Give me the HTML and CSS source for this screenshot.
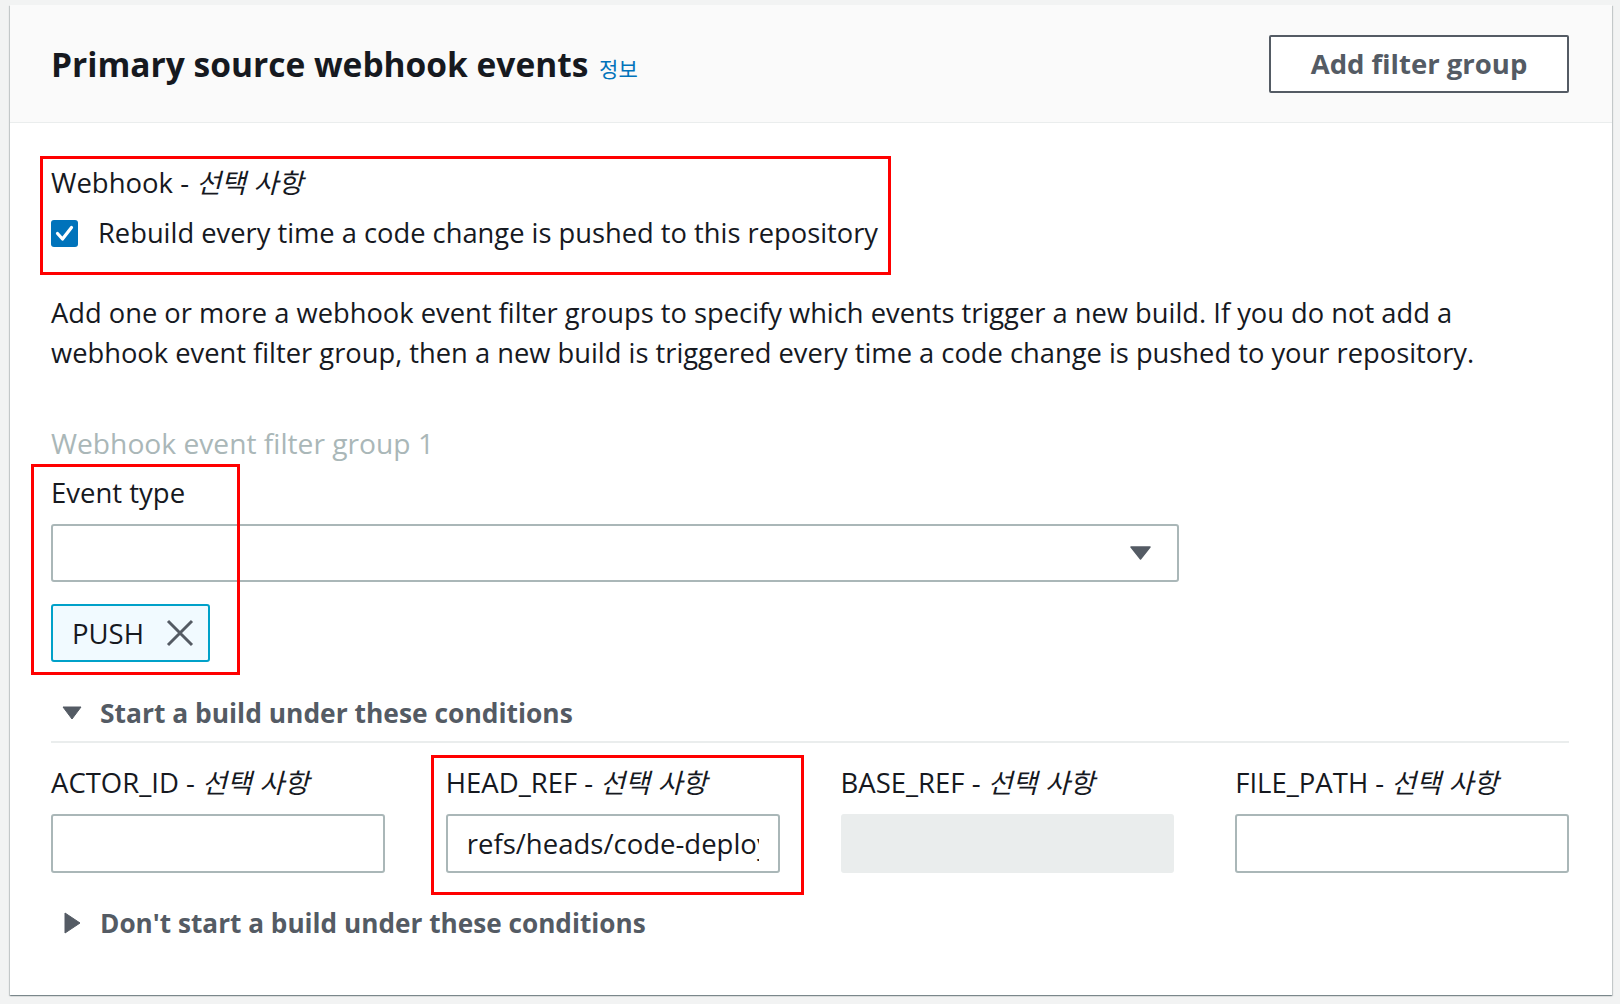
FILE: index.html
```html
<!DOCTYPE html>
<html lang="ko">
<head>
<meta charset="utf-8">
<title>Primary source webhook events</title>
<link rel="stylesheet" href="styles.css">
</head>
<body>
<section class="card">
  <header class="card-header">
    <h2 class="title">Primary source webhook events <a class="info" href="#">정보</a></h2>
    <button class="btn" type="button">Add filter group</button>
  </header>
  <div class="card-body">
    <div class="label">Webhook - <i class="opt">선택 사항</i></div>
    <label class="check-row">
      <svg class="checkbox" viewBox="0 0 27 27" width="27" height="27"><rect x="0" y="0" width="27" height="27" rx="3" fill="#0073bb"/><path d="M6.5 13.5 L11.5 19 L20.5 7.5" fill="none" stroke="#fff" stroke-width="3.2" stroke-linecap="round" stroke-linejoin="round"/></svg>
      <span>Rebuild every time a code change is pushed to this repository</span>
    </label>
    <p class="desc">Add one or more a webhook event filter groups to specify which events trigger a new build. If you do not add a webhook event filter group, then a new build is triggered every time a code change is pushed to your repository.</p>
    <div class="group-title">Webhook event filter group 1</div>
    <div class="label label-event">Event type</div>
    <div class="select">
      <svg class="caret" viewBox="0 0 21 14" width="21" height="14"><path d="M1 1 H20 L10.5 13 Z" fill="#545b64" stroke="#545b64" stroke-width="1.5" stroke-linejoin="round"/></svg>
    </div>
    <div class="token">
      <span>PUSH</span>
      <svg class="x" viewBox="0 0 28 28" width="28" height="28"><path d="M2 2 L26 26 M26 2 L2 26" stroke="#545b64" stroke-width="3" fill="none"/></svg>
    </div>
    <div class="expander">
      <svg class="tri" viewBox="0 0 20 14" width="20" height="14"><path d="M1 1 H19 L10 13 Z" fill="#545b64" stroke="#545b64" stroke-linejoin="round"/></svg>
      <span>Start a build under these conditions</span>
    </div>
    <div class="divider"></div>
    <div class="fields">
      <div class="field">
        <div class="label">ACTOR_ID - <i class="opt">선택 사항</i></div>
        <div class="input"></div>
      </div>
      <div class="field">
        <div class="label">HEAD_REF - <i class="opt">선택 사항</i></div>
        <div class="input"><span class="val">refs/heads/code-deploy</span></div>
      </div>
      <div class="field">
        <div class="label">BASE_REF - <i class="opt">선택 사항</i></div>
        <div class="input disabled"></div>
      </div>
      <div class="field">
        <div class="label">FILE_PATH - <i class="opt">선택 사항</i></div>
        <div class="input"></div>
      </div>
    </div>
    <div class="expander expander-closed">
      <svg class="tri-r" viewBox="0 0 17 22" width="17" height="22"><path d="M1 1 V21 L16 11 Z" fill="#545b64" stroke="#545b64" stroke-linejoin="round"/></svg>
      <span>Don't start a build under these conditions</span>
    </div>
  </div>
</section>
<div class="mark mark-webhook"></div>
<div class="mark mark-event"></div>
<div class="mark mark-head"></div>
</body>
</html>
```
FILE: styles.css
```css
html, body {
  margin: 0;
  padding: 0;
}
body {
  background: #f2f3f3;
  font-family: "Open Sans", "Noto Sans CJK KR", sans-serif;
  color: #16191f;
  padding: 5px 8px 9px 10px;
  width: 1620px;
  height: 1004px;
  box-sizing: border-box;
  overflow: hidden;
}
.card {
  background: #fff;
  height: 990px;
  box-sizing: border-box;
  box-shadow: 0 1px 1px 0 rgba(0, 28, 36, 0.3), 1px 1px 1px 0 rgba(0, 28, 36, 0.15), -1px 1px 1px 0 rgba(0, 28, 36, 0.15);
}
.card-header {
  height: 118px;
  box-sizing: border-box;
  background: #fafafa;
  border-bottom: 1px solid #eaeded;
  display: flex;
  align-items: center;
  justify-content: space-between;
  padding: 0 43px 0 41px;
}
.title {
  margin: 0;
  font-size: 33.5px;
  font-weight: 700;
  color: #16191f;
  line-height: 40px;
  position: relative;
  top: 2px;
}
.info {
  font-size: 21px;
  font-weight: 400;
  color: #0073bb;
  text-decoration: none;
  font-family: "Noto Sans CJK KR", sans-serif;
  margin-left: 2px;
}
.btn {
  width: 300px;
  height: 58px;
  border: 2px solid #545b64;
  border-radius: 2px;
  background: #fff;
  color: #545b64;
  font-family: "Open Sans", sans-serif;
  font-weight: 700;
  font-size: 27.5px;
  padding: 0;
}
.card-body {
  padding: 42px 43px 0 41px;
}
.label {
  font-size: 27.5px;
  line-height: 34px;
  color: #16191f;
}
.opt {
  font-family: "Noto Sans CJK KR", sans-serif;
  font-style: italic;
  font-size: 27px;
}
.check-row {
  display: flex;
  align-items: center;
  gap: 20px;
  margin-top: 16px;
  font-size: 27.3px;
  line-height: 34px;
}
.checkbox {
  flex: none;
}
.desc {
  margin: 43px 0 0;
  font-size: 27.3px;
  line-height: 40px;
  width: 1450px;
}
.group-title {
  margin-top: 52px;
  font-size: 28.2px;
  line-height: 36px;
  color: #aab7b8;
}
.label-event {
  margin-top: 15px;
}
.select {
  margin-top: 14px;
  width: 1128px;
  height: 58px;
  box-sizing: border-box;
  border: 2px solid #aab7b8;
  border-radius: 3px;
  display: flex;
  align-items: center;
  justify-content: flex-end;
  padding-right: 26px;
}
.token {
  margin-top: 22px;
  width: 159px;
  height: 58px;
  box-sizing: border-box;
  border: 2px solid #00a1c9;
  border-radius: 3px;
  background: #f1faff;
  display: flex;
  align-items: center;
  padding-left: 19px;
  gap: 22px;
  font-size: 27.5px;
}
.expander {
  display: flex;
  align-items: center;
  gap: 18px;
  margin-top: 34px;
  padding-left: 11px;
  font-size: 26.4px;
  font-weight: 700;
  line-height: 34px;
  color: #545b64;
}
.divider {
  margin-top: 11px;
  height: 2px;
  background: #eaeded;
}
.fields {
  display: grid;
  grid-template-columns: repeat(4, minmax(0, 1fr));
  column-gap: 61px;
  margin-top: 22px;
}
.field {
  min-width: 0;
}
.field .input {
  margin-top: 14px;
}
.input {
  height: 59px;
  box-sizing: border-box;
  border: 2px solid #aab7b8;
  border-radius: 3px;
  background: #fff;
  display: flex;
  align-items: center;
  padding: 0 19px;
  font-size: 27.5px;
}
.val {
  flex: 1;
  min-width: 0;
  overflow: hidden;
  white-space: nowrap;
}
.input.disabled {
  background: #eaeded;
  border-color: #eaeded;
}
.expander-closed {
  margin-top: 33px;
  gap: 19px;
  padding-left: 13px;
  font-size: 26.2px;
}
.mark {
  position: absolute;
  border: 3px solid #ff0000;
  box-sizing: border-box;
}
.mark-webhook {
  left: 40px;
  top: 156px;
  width: 851px;
  height: 119px;
}
.mark-event {
  left: 31px;
  top: 464px;
  width: 209px;
  height: 211px;
}
.mark-head {
  left: 431px;
  top: 755px;
  width: 373px;
  height: 140px;
}
```
